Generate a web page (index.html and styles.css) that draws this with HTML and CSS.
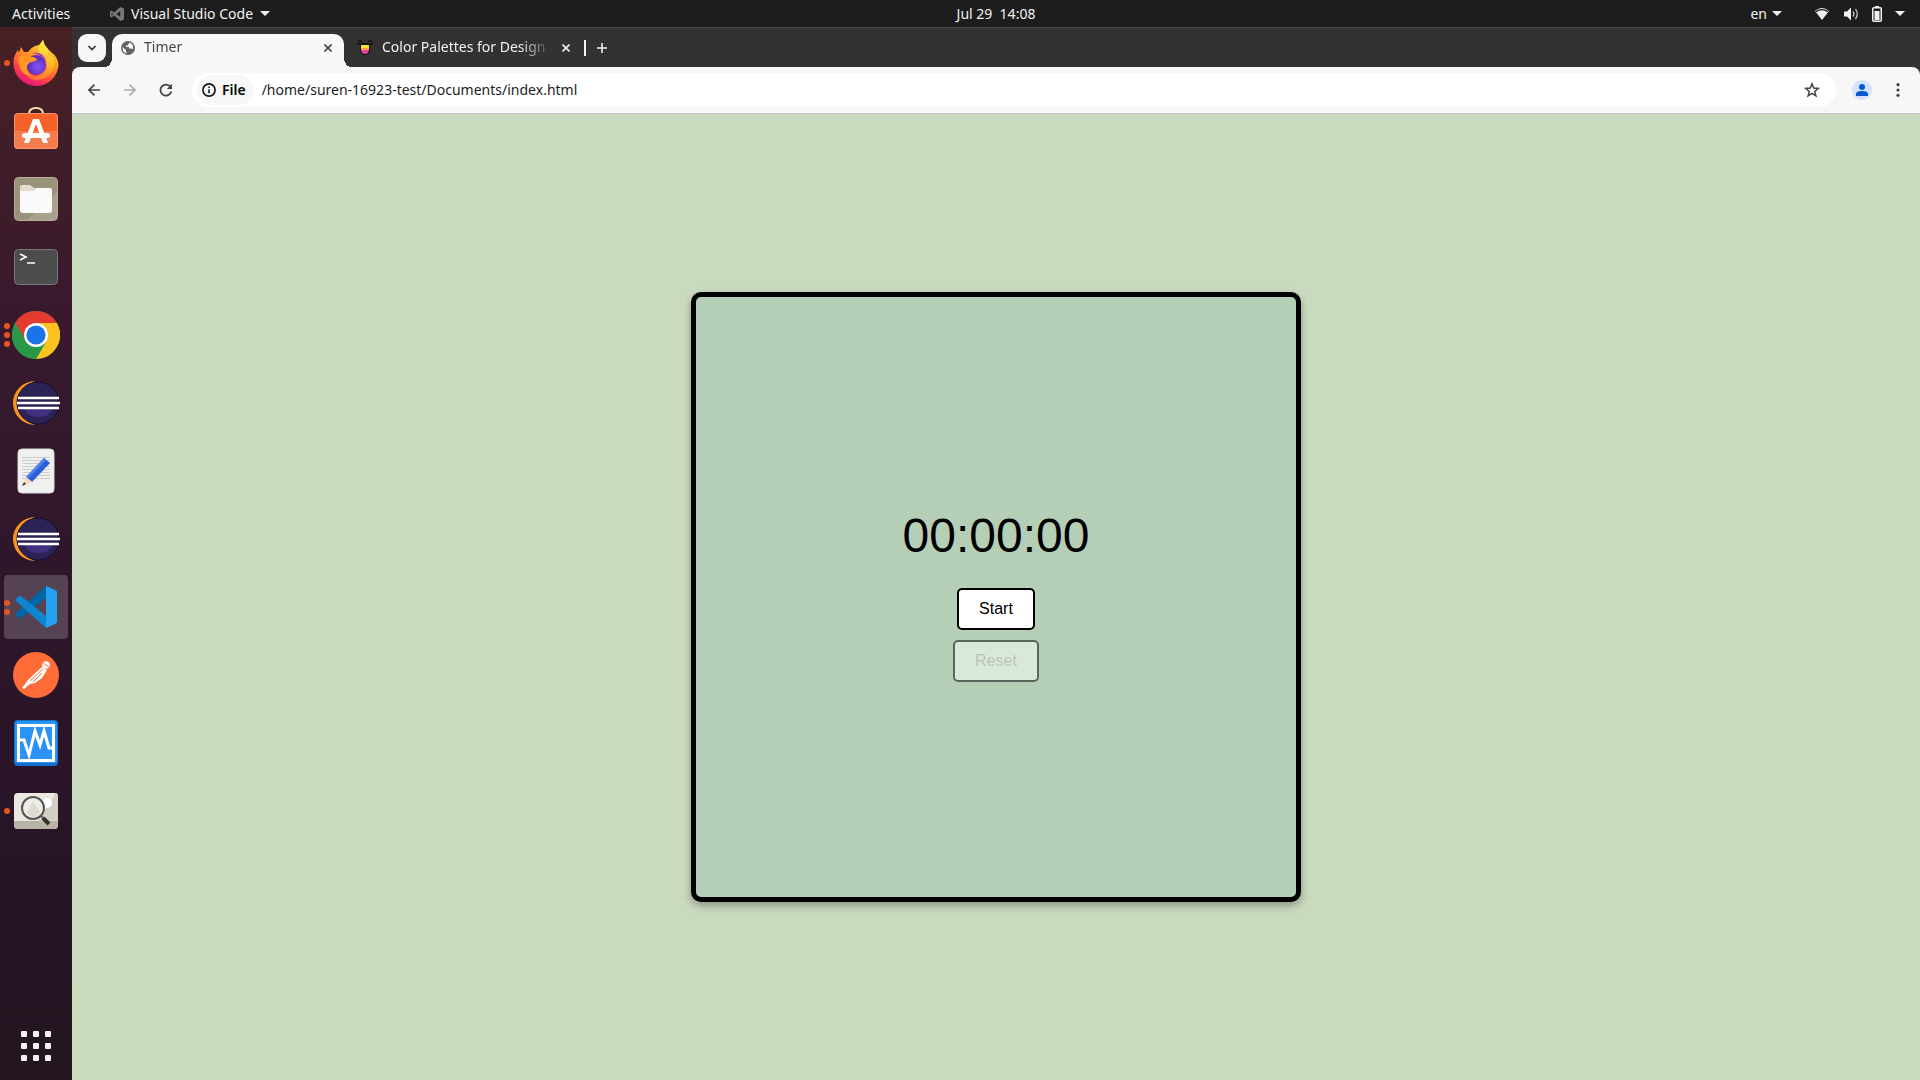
FILE: index.html
```html
<!DOCTYPE html>
<html lang="en">
<head>
<meta charset="utf-8">
<title>Timer</title>
<link rel="stylesheet" href="styles.css">
</head>
<body>
<header class="topbar">
  <button class="topbar-btn activities">Activities</button>
  <button class="topbar-btn app-menu">
    <svg width="14" height="14" viewBox="0 0 44 44" fill="#777"><path d="M32 0 44 5v34l-12 5L13 27l-8 6-5-3V14l5-3 8 6zM32 13 20 22l12 9zM5 17v10l5-5z" fill-rule="evenodd"/></svg>
    <span>Visual Studio Code</span>
    <i class="caret"></i>
  </button>
  <button class="topbar-btn clock">Jul 29&nbsp; 14:08</button>
  <div class="tray">
    <button class="topbar-btn lang">en <i class="caret"></i></button>
    <button class="topbar-btn status" aria-label="System menu">
      <svg width="16" height="14" viewBox="0 0 16 14"><path d="M1 4Q8-2 15 4L8 13z" fill="#f2f2f2"/><path d="M2 4.600Q8 .5 14 4.600" fill="none" stroke="#1d1d1d" stroke-width="1.300"/></svg>
      <svg width="16" height="14" viewBox="0 0 16 14"><path d="M1 4.500h3L8 .5v13L4 9.500H1z" fill="#f2f2f2"/><path d="M10 4.500q1.800 2.500 0 5M12.500 2q3.500 5 0 10" fill="none" stroke="#ccc" stroke-width="1.300"/></svg>
      <svg width="10" height="16" viewBox="0 0 10 16"><path d="M3 0h4v2H3z" fill="#f2f2f2"/><rect x=".75" y="1.750" width="8.500" height="13.500" rx="1" fill="none" stroke="#f2f2f2" stroke-width="1.500"/><path d="M2.500 5h5v9h-5z" fill="#f2f2f2"/></svg>
      <i class="caret"></i>
    </button>
  </div>
</header>

<div class="desktop">
  <nav class="dock" aria-label="Applications">
    <button class="dock-item" aria-label="Firefox">
      <span class="dots"><i></i></span>
      <svg width="48" height="48" viewBox="0 0 48 48">
        <defs>
          <linearGradient id="fx" x1=".8" y1="0" x2=".3" y2="1"><stop offset="0" stop-color="#ffe83f"/><stop offset=".4" stop-color="#ff9a22"/><stop offset=".7" stop-color="#ff4a42"/><stop offset="1" stop-color="#e5107e"/></linearGradient>
          <linearGradient id="fy" x1=".5" y1="0" x2=".4" y2="1"><stop offset="0" stop-color="#fff24a"/><stop offset=".6" stop-color="#ffb524"/><stop offset="1" stop-color="#ff7130"/></linearGradient>
          <radialGradient id="fp" cx=".6" cy=".6"><stop offset="0" stop-color="#8a52ff"/><stop offset="1" stop-color="#5b2fb5"/></radialGradient>
        </defs>
        <path d="M31 1q1 6 5 9l3 3q7 5 7.500 13A22.500 22.500 0 0 1 24 47 22.500 22.500 0 0 1 1.500 25Q1 17 6 11l1 3 2-6 3 5h4Q20 7 27 6z" fill="url(#fx)"/>
        <path d="M31 1q1 5 5 9 1 4-1 5 8 1 7 12-1 9-11 13-10 3-16-3 17 3 20-9 1-8-5-13Q22 14 31 1z" fill="url(#fy)"/>
        <circle cx="24" cy="26" r="10" fill="url(#fp)"/>
        <path d="M6 20Q10 13 17 18q5-1 8 2-1 3-6 3-4 2-4 5 0 7 7 9-9 1-13-6-3-5-3-11z" fill="#ff9720"/>
        <path d="M20 14q12-2 14 9 1 6-2 10 5-8-1-14-4-4-11-5z" fill="#a836d3"/>
      </svg>
    </button>
    <button class="dock-item" aria-label="Ubuntu Software">
      <svg width="48" height="48" viewBox="0 0 48 48">
        <path d="M17 11V7q0-6 7-6t7 6v4" fill="none" stroke="#f4dcae" stroke-width="2"/>
        <rect x="2" y="6" width="44" height="36" rx="4" fill="#f4622a"/><path d="M2 24h44v14q0 4-4 4H6q-4 0-4-4z" fill="#f47b4c"/>
        <rect x="2.500" y="6.500" width="43" height="35" rx="4" fill="none" stroke="#f9956d"/>
        <path d="m12 36 9-24h6l9 24h-5l-7-19-7 19z" fill="#fff"/><rect x="10" y="26" width="28" height="5" rx="2.500" fill="#fff"/>
      </svg>
    </button>
    <button class="dock-item" aria-label="Files">
      <svg width="48" height="48" viewBox="0 0 48 48"><rect x="2.500" y="2.500" width="43" height="43" rx="4" fill="#9b927c" stroke="#b5ae9b"/><path d="M45 17v24q0 4-4 4H15z" fill="#aaa28f"/><path d="M8 23V12q0-2 2-2h8l4 3h16v8z" fill="#e1dccd"/><path d="M8 16h14l3-3h13q2 0 2 2v20q0 3-3 3H11q-3 0-3-3z" fill="#fafafa"/></svg>
    </button>
    <button class="dock-item" aria-label="Terminal">
      <svg width="48" height="48" viewBox="0 0 48 48"><rect x="2.500" y="6.500" width="43" height="35" rx="4" fill="#4d4d4d" stroke="#777"/><path d="m8 11 6 3-6 3M15 20h8" fill="none" stroke="#fff" stroke-width="1.600"/></svg>
    </button>
    <button class="dock-item" aria-label="Google Chrome">
      <span class="dots"><i></i><i></i><i></i></span>
      <svg width="48" height="48" viewBox="0 0 48 48">
        <circle cx="24" cy="24" r="24" fill="#34a853"/>
        <path d="M3.200 12A24 24 0 0 1 44.800 12H24L13.600 30z" fill="#e33b2e"/>
        <path d="M24 12h20.800A24 24 0 0 1 24 48l10.400-18z" fill="#fcc31e"/>
        <path d="M3.200 12 13.600 30 24 36l10.400-6L24 48A24 24 0 0 1 3.200 12z" fill="#299848"/>
        <circle cx="24" cy="24" r="12" fill="#fff"/><circle cx="24" cy="24" r="9.600" fill="#1a73e8"/>
      </svg>
    </button>
    <button class="dock-item" aria-label="Eclipse">
      <svg width="48" height="48" viewBox="0 0 48 48"><path d="M23 2A22 22 0 0 0 23 46Q7 39 7 24T23 2z" fill="#f7941e"/><circle cx="26" cy="24" r="21" fill="#2c2255" stroke="#15102f"/><path d="M12 29h29q-3 9-14 9T12 29z" fill="#413082"/><path d="M6 19h41M5 24h43M6 29h41" stroke="#fff" stroke-width="2.500"/></svg>
    </button>
    <button class="dock-item" aria-label="Text Editor">
      <svg width="48" height="48" viewBox="0 0 48 48"><rect x="6" y="2" width="36" height="44" rx="4" fill="#f0f0f0" stroke="#ddd"/><path d="M10 10.500h28m-28 3h28m-28 3h28m-28 3h28m-28 3h28m-28 3h28m-28 3h28m-28 3h28" stroke="#ccc"/><path d="M14 30 32 11l6 5-18 19z" fill="#2b5fd9"/><path d="m14 30 18-19 2 2-18 19z" fill="#4b83ee"/><path d="m14 30 6 5-9 4z" fill="#f8d7b4"/><path d="m12 35 2 2-4 2z" fill="#333"/></svg>
    </button>
    <button class="dock-item" aria-label="Eclipse IDE">
      <svg width="48" height="48" viewBox="0 0 48 48"><path d="M23 2A22 22 0 0 0 23 46Q7 39 7 24T23 2z" fill="#f7941e"/><circle cx="26" cy="24" r="21" fill="#2c2255" stroke="#15102f"/><path d="M12 29h29q-3 9-14 9T12 29z" fill="#413082"/><path d="M6 19h41M5 24h43M6 29h41" stroke="#fff" stroke-width="2.500"/></svg>
    </button>
    <button class="dock-item dock-item-active" aria-label="Visual Studio Code">
      <span class="dots"><i></i><i></i></span>
      <svg width="48" height="48" viewBox="0 0 48 48"><path d="M34 3v12L9 35q-1 1-2 0l-3-3q-1-1 0-2z" fill="#0065a9"/><path d="M34 45V33L9 13q-1-1-2 0l-3 3q-1 1 0 2z" fill="#0d86cf"/><path d="m34 3 9 4q2 1 2 2v30q0 1-2 2l-9 4z" fill="#24a2f0"/></svg>
    </button>
    <button class="dock-item" aria-label="Postman">
      <svg width="48" height="48" viewBox="0 0 48 48"><circle cx="24" cy="24" r="23" fill="#ff6c37"/><circle cx="34" cy="14" r="3.800" fill="#fff"/><path d="m30 16 5 3-5 8-7 5-5 1-6 5-2-1 6-8 3-3z" fill="#fff"/><path d="M31 18 18 30m12-8-9 9M31 12l6 4" stroke="#ff6c37"/></svg>
    </button>
    <button class="dock-item" aria-label="System Monitor">
      <svg width="48" height="48" viewBox="0 0 48 48"><rect x="2" y="1" width="44" height="46" rx="4" fill="#126fd0"/><rect x="3" y="2" width="42" height="42" rx="4" fill="#2a95fa"/><rect x="6.500" y="6.500" width="35" height="35" fill="#2a93f5" stroke="#fff" stroke-width="3"/><path d="M6 21h6l5 15 6-24 5 14 4-14 5 17h5" fill="none" stroke="#fff" stroke-width="3"/></svg>
    </button>
    <button class="dock-item" aria-label="Image Viewer">
      <span class="dots"><i></i></span>
      <svg width="48" height="48" viewBox="0 0 48 48"><rect x="2" y="6" width="44" height="36" rx="4" fill="#eae8df"/><path d="m26 34 18-28q2 0 2 4v24z" fill="#d3d0c3"/><path d="M2 34h44v4q0 4-4 4H6q-4 0-4-4z" fill="#b8b3a4"/><circle cx="35" cy="16" r="5" fill="#fff"/><circle cx="21" cy="21" r="11" fill="#eeece6" stroke="#555" stroke-width="2"/><path d="m15 26 6-12 7 12-6 5z" fill="#dddbd2"/><path d="m29 29 2 2" stroke="#555" stroke-width="2"/><path d="m31 31 6 6" stroke="#333" stroke-width="4"/></svg>
    </button>
    <button class="dock-item show-apps" aria-label="Show Applications">
      <svg width="30" height="30" viewBox="0 0 30 30" fill="#f2f0ee"><rect width="6" height="6" rx="1"/><rect x="12" width="6" height="6" rx="1"/><rect x="24" width="6" height="6" rx="1"/><rect y="12" width="6" height="6" rx="1"/><rect x="12" y="12" width="6" height="6" rx="1"/><rect x="24" y="12" width="6" height="6" rx="1"/><rect y="24" width="6" height="6" rx="1"/><rect x="12" y="24" width="6" height="6" rx="1"/><rect x="24" y="24" width="6" height="6" rx="1"/></svg>
    </button>
  </nav>

  <section class="browser">
    <div class="tabstrip">
      <button class="tab-search" aria-label="Search tabs"><svg width="10" height="10" viewBox="0 0 10 10"><path d="m1.500 3 3.500 3.500L8.500 3" fill="none" stroke="#333" stroke-width="1.700"/></svg></button>
      <div class="tab tab-active">
        <svg class="favicon" width="14" height="14" viewBox="0 0 14 14"><circle cx="7" cy="7" r="7" fill="#5f6368"/><path d="M1.500 6 5 9v1.500l1 2q-4-.5-4.500-5zM8 1.500q3 .5 4 3v4q-1-1-2-1H8V6H5V4.500h2V3h1z" fill="#f7f7f7"/></svg>
        <span class="tab-title">Timer</span>
        <button class="tab-close" aria-label="Close tab"><svg width="8" height="8" viewBox="0 0 8 8"><path d="m.5.5 7 7m0-7-7 7" stroke="currentColor" stroke-width="1.600"/></svg></button>
      </div>
      <div class="tab">
        <svg class="favicon" width="16" height="16" viewBox="0 0 16 16"><path d="M1 2q2-2 4 0M11 2q2-2 4 0M0 4h16" stroke="#111" fill="none" stroke-width="1.500"/><path d="M3 4h10v5q0 6-5 6T3 9z" fill="#111"/><path d="M4 5h8v4H4z" fill="#ffe12e"/><path d="M4 8h8v2H4z" fill="#ff9f40"/><path d="M4 10h8q-.5 4-4 4t-4-4z" fill="#e2459b"/></svg>
        <span class="tab-title">Color Palettes for Design</span>
        <button class="tab-close" aria-label="Close tab"><svg width="8" height="8" viewBox="0 0 8 8"><path d="m.5.5 7 7m0-7-7 7" stroke="currentColor" stroke-width="1.600"/></svg></button>
      </div>
      <i class="tab-divider"></i>
      <button class="new-tab" aria-label="New tab"><svg width="10" height="10" viewBox="0 0 10 10"><path d="M5 0v10M0 5h10" stroke="#f2f2f2" stroke-width="1.600"/></svg></button>
    </div>

    <div class="toolbar">
      <button class="tool" aria-label="Back"><svg width="12" height="12" viewBox="0 0 12 12"><path d="M12 6H1m5.500-5.300L1 6l5.500 5.300" fill="none" stroke="#444" stroke-width="1.700"/></svg></button>
      <button class="tool" aria-label="Forward"><svg width="12" height="12" viewBox="0 0 12 12"><path d="M0 6h11M5.500.7 11 6l-5.500 5.300" fill="none" stroke="#aaa" stroke-width="1.700"/></svg></button>
      <button class="tool" aria-label="Reload"><svg width="14" height="14" viewBox="0 0 14 14"><path d="M12.300 8.500A5.500 5.500 0 1 1 11.500 4" fill="none" stroke="#444" stroke-width="1.800"/><path d="M13 .8V6H7.800z" fill="#444"/></svg></button>
      <div class="omnibox">
        <button class="chip"><svg width="14" height="14" viewBox="0 0 14 14"><circle cx="7" cy="7" r="6.100" fill="none" stroke="#111" stroke-width="1.600"/><path d="M7 6.300v4M7 3.500v1.500" stroke="#111" stroke-width="1.500"/></svg><span>File</span></button>
        <input class="address" type="text" aria-label="Address" value="/home/suren-16923-test/Documents/index.html">
        <button class="star" aria-label="Bookmark"><svg width="16" height="16" viewBox="0 0 16 16"><path d="m8 1.800 1.700 4.300 4.600.3-3.600 3 1.200 4.500L8 11.400l-3.900 2.500 1.200-4.500-3.600-3 4.600-.3z" fill="none" stroke="#444" stroke-width="1.500"/></svg></button>
      </div>
      <button class="tool profile" aria-label="Profile"><svg width="20" height="20" viewBox="0 0 20 20"><circle cx="10" cy="10" r="10" fill="#d3e3fd"/><circle cx="10" cy="7" r="3" fill="#0b57d0"/><path d="M4 16v-2q0-3 6-3t6 3v2z" fill="#0b57d0"/></svg></button>
      <button class="tool" aria-label="Menu"><svg width="4" height="14" viewBox="0 0 4 14" fill="#444"><circle cx="2" cy="1.700" r="1.600"/><circle cx="2" cy="7" r="1.600"/><circle cx="2" cy="12.300" r="1.600"/></svg></button>
    </div>

    <main class="page">
      <div class="timer-card">
        <div class="time">00:00:00</div>
        <button class="timer-btn">Start</button>
        <button class="timer-btn" disabled>Reset</button>
      </div>
    </main>
  </section>
</div>
</body>
</html>
```
FILE: styles.css
```css
* { box-sizing: border-box; }

body {
  margin: 0;
  min-height: 100vh;
  display: flex;
  flex-direction: column;
  background: #1d1d1d;
  font-family: "Noto Sans", sans-serif;
  font-size: 14px;
}

button {
  margin: 0;
  padding: 0;
  border: 0;
  background: none;
  color: inherit;
  font: inherit;
}

svg { display: block; flex: none; }

/* System bar */
.topbar {
  display: grid;
  grid-template-columns: 72px 1fr auto 1fr;
  align-items: center;
  height: 27px;
  color: #f2f2f2;
}

.topbar-btn {
  display: flex;
  align-items: center;
  white-space: nowrap;
  line-height: 20px;
}

.activities { padding-left: 12px; }
.app-menu { gap: 7px; padding-left: 38px; }

.caret {
  border: 5px solid transparent;
  border-top-color: #f2f2f2;
  border-bottom: 0;
}

.tray {
  display: flex;
  justify-content: flex-end;
  gap: 32px;
  padding-right: 15px;
}

.lang { gap: 5px; }
.status { gap: 13px; }

/* Desktop and dock */
.desktop { flex: 1; display: flex; }

.dock {
  display: flex;
  flex-direction: column;
  gap: 4px;
  width: 72px;
  padding: 4px 4px 2px;
  background: linear-gradient(#472024, #3a1a2c 24%, #2f172b 50%, #281527 75%, #22151f);
}

.dock-item {
  position: relative;
  display: flex;
  align-items: center;
  justify-content: center;
  height: 64px;
  border-radius: 4px;
}

.dock-item-active { background: #554252; }
.show-apps { margin-top: auto; }

.dots {
  position: absolute;
  left: 0;
  top: 0;
  height: 100%;
  display: flex;
  flex-direction: column;
  justify-content: center;
  gap: 3px;
}

.dots i {
  width: 6px;
  height: 6px;
  border-radius: 50%;
  background: #e95420;
}

/* Browser window */
.browser {
  flex: 1;
  min-width: 0;
  display: flex;
  flex-direction: column;
  background: #333132;
}

.tabstrip {
  display: flex;
  align-items: center;
  height: 40px;
  padding: 6px 6px 0;
  border-top: 1px solid #4a4849;
}

.tab-search {
  display: flex;
  align-items: center;
  justify-content: center;
  width: 28px;
  height: 28px;
  margin: 0 6px 6px 0;
  border-radius: 9px;
  background: #f7f7f7;
}

.tab {
  position: relative;
  display: flex;
  align-items: center;
  gap: 9px;
  width: 232px;
  height: 34px;
  padding: 0 12px 6px 9px;
  color: #f0f0f0;
}

.tab + .tab { padding-left: 13px; padding-right: 6px; }

.tab-active {
  border-radius: 10px 10px 0 0;
  background: #f7f7f7;
  color: #444;
}

.tab-active::before,
.tab-active::after {
  content: "";
  position: absolute;
  bottom: 0;
  width: 10px;
  height: 10px;
}

.tab-active::before {
  right: 100%;
  background: radial-gradient(circle at 0 0, transparent 10px, #f7f7f7 10px);
}

.tab-active::after {
  left: 100%;
  background: radial-gradient(circle at 100% 0, transparent 10px, #f7f7f7 10px);
}

.tab-title {
  flex: 1;
  padding-bottom: 2px;
  white-space: nowrap;
  line-height: 20px;
  mask-image: linear-gradient(90deg, #000 80%, transparent);
}

.tab-close { padding: 4px 0; }

.tab-divider {
  width: 2px;
  height: 16px;
  margin: 0 11px 6px 8px;
  background: #f2f2f2;
}

.new-tab { margin-bottom: 6px; }

.toolbar {
  display: flex;
  align-items: center;
  height: 47px;
  padding: 0 4px;
  border-bottom: 1px solid #c4c4c4;
  border-radius: 8px 8px 0 0;
  background: #f7f7f7;
}

.tool {
  display: flex;
  align-items: center;
  justify-content: center;
  width: 36px;
  height: 34px;
}

.omnibox {
  flex: 1;
  display: flex;
  align-items: center;
  height: 34px;
  margin: 0 8px;
  padding: 0 16px 0 5px;
  border-radius: 17px;
  background: #fff;
}

.chip {
  display: flex;
  align-items: center;
  gap: 6px;
  height: 30px;
  padding: 0 8px 0 5px;
  border-radius: 15px;
  background: #f7f7f7;
  font-weight: 600;
}

.chip span { padding-bottom: 2px; }

.address {
  flex: 1;
  padding: 0 8px 2px;
  border: 0;
  outline: 0;
  background: none;
  color: #1c1c1c;
  font: inherit;
}

/* Timer page */
.page {
  flex: 1;
  display: flex;
  align-items: center;
  justify-content: center;
  background: #cadabf;
  font-family: "Liberation Sans", Arial, sans-serif;
}

.timer-card {
  display: flex;
  flex-direction: column;
  align-items: center;
  justify-content: center;
  width: 610px;
  aspect-ratio: 1;
  border: 5px solid #000;
  border-radius: 10px;
  background: #b5cfb7;
  box-shadow: 0 4px 8px rgba(0, 0, 0, .3);
}

.time {
  margin-bottom: 20px;
  font-size: 48px;
  line-height: 55px;
}

.timer-btn {
  margin: 5px;
  padding: 10px 20px;
  border: 2px solid #000;
  border-radius: 5px;
  background: #fff;
  color: #000;
  font-size: 16px;
  line-height: 18px;
}

.timer-btn:disabled {
  opacity: .5;
  color: rgba(16, 16, 16, .3);
}
```
